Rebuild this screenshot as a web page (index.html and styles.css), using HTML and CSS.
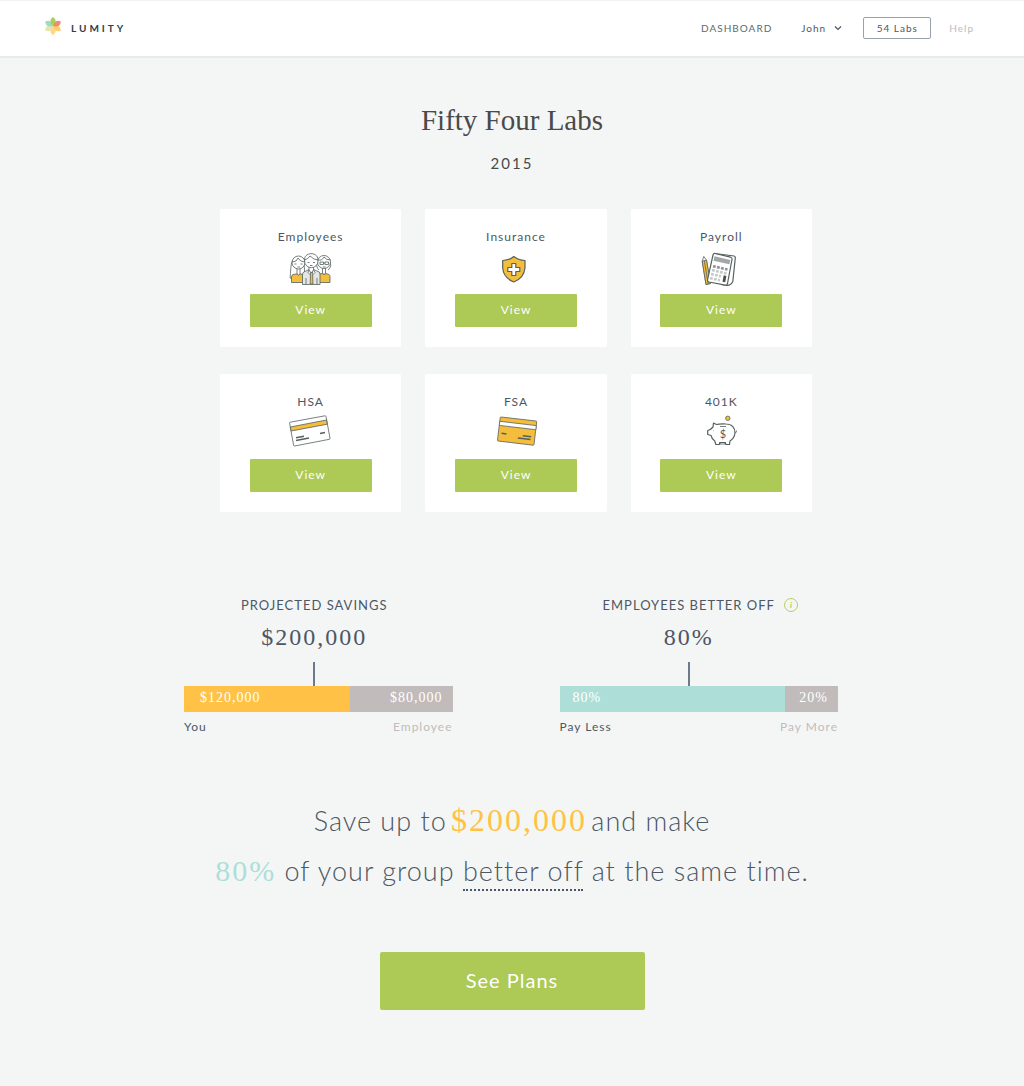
FILE: index.html
```
<!DOCTYPE html>
<html lang="en">
<head>
    <meta charset="UTF-8">
    <meta name="viewport" content="width=device-width, initial-scale=1.0">
    <title>Lumity - Fifty Four Labs</title>
    <link rel="stylesheet" href="styles.css">
</head>
<body>
    <header class="header">
        <a class="logo" href="#">
            <svg class="logo-mark" viewBox="0 0 18 20" aria-hidden="true">
                <g transform="translate(9 10)" fill-opacity="0.85">
                    <path fill="#fdd272" d="M0 0C-4 4-3 7 0 9C3 7 4 4 0 0Z"/>
                    <path fill="#fdc55a" transform="rotate(-60)" d="M0 0C-4 4-3 7 0 9C3 7 4 4 0 0Z"/>
                    <path fill="#dfe2a0" transform="rotate(60)" d="M0 0C-4 4-3 7 0 9C3 7 4 4 0 0Z"/>
                    <path fill="#8ed6bd" transform="rotate(120)" d="M0 0C-4 4-3 7 0 9C3 7 4 4 0 0Z"/>
                    <path fill="#f5735c" transform="rotate(-120)" d="M0 0C-4 4-3 7 0 9C3 7 4 4 0 0Z"/>
                    <path fill="#9dc544" transform="rotate(180)" d="M0 0C-4 4-3 7 0 9C3 7 4 4 0 0Z"/>
                </g>
            </svg>
            <span>LUMITY</span>
        </a>
        <nav class="nav-menu">
            <a class="nav-link" href="#">DASHBOARD</a>
            <div class="user-menu">
                <select class="user-select" aria-label="Account">
                    <option>John</option>
                </select>
                <svg class="chevron" viewBox="0 0 8 6" aria-hidden="true"><path d="M1 1.5L4 4.5L7 1.5"/></svg>
            </div>
            <button class="company-btn" type="button">54 Labs</button>
            <a class="help-link" href="#">Help</a>
        </nav>
    </header>

    <main>
        <h1>Fifty Four Labs</h1>
        <p class="year">2015</p>

        <!-- Benefit cards -->
        <section class="cards">
            <div class="card">
                <h2>Employees</h2>
                <svg class="icon" viewBox="0 0 44 36" aria-hidden="true">
                    <path fill="#fff" d="M4 10C1 15 2 22 1 28L6 29M14 10C16 14 15 22 16 25"/>
                    <path class="gold" d="M2.5 32.5V27Q2.5 24.5 5 24.3L8 24Q9.500 26 11 24L15 24.500V32.500Z"/>
                    <path fill="#fff" d="M8 18V24Q9.500 26 11 24V18"/>
                    <circle fill="#fff" cx="9.500" cy="12.500" r="6.500"/>
                    <path d="M3 12Q8 12 9 8Q11 12 16 12M5.500 14H7.500M11.500 14H13.500M8.500 17H11"/>
                    <path fill="#fff" d="M29 10Q26 17 30 20M40 10Q44 16 39 20"/>
                    <path class="gold" d="M28 32.500V24.500L33 23.500Q35 25.500 37 23.500L40 24.500Q41 25 41 27V32.500Z"/>
                    <path fill="#fff" d="M33.500 18V23.500Q35 25 36.500 23.500V18"/>
                    <circle fill="#fff" cx="35" cy="12" r="6.500"/>
                    <path d="M28.500 10Q33 11 35 7Q37 10 41.500 10M31 12H34.500V14.500H31ZM36 12H39.500V14.500H36ZM34.500 13H36M34 17H36.500"/>
                    <path class="grey" d="M13.500 34.500V24Q14 21.500 17 21L20 19.500H24.500L28 21Q31 21.500 31 24V34.500Z"/>
                    <path class="gold" d="M21.500 22H23.500L24 34H21.200Z"/>
                    <path fill="#fff" d="M20 16V20L22.300 23L24.500 20V16M20 20L19 22.500L21.500 25M24.500 20L26 22.500L23.500 25M17 28V34.500M28 28V34.500"/>
                    <circle fill="#fff" cx="22.300" cy="11" r="6.700"/>
                    <path fill="#fff" d="M15.500 10C15 2 29 1 29 10Q25 10 21 6Q19 9 15.500 10Z"/>
                    <path d="M18.500 12.500H20.500M24 12.500H26M21 15.500H23.500"/>
                </svg>
                <button class="btn" type="button">View</button>
            </div>
            <div class="card">
                <h2>Insurance</h2>
                <svg class="icon" viewBox="0 0 44 36" aria-hidden="true">
                    <path class="gold strong" d="M19.800 6.500Q24 10 31 10.500V18Q30 28 19.800 32Q9.600 28 8.700 18V10.500Q16 10 19.800 6.500Z"/>
                    <path class="strong" fill="#fff" d="M17.800 13.500H21.800V17.500H25.800V21.500H21.800V25.500H17.800V21.500H13.800V17.500H17.800Z"/>
                </svg>
                <button class="btn" type="button">View</button>
            </div>
            <div class="card">
                <h2>Payroll</h2>
                <svg class="icon" viewBox="0 0 44 36" aria-hidden="true">
                    <path fill="#fff" d="M3.200 11L4.800 6.500L7.500 10.200L11.500 33.500L7 34.500Z"/>
                    <path class="gold" d="M3.200 11L7.500 10.200L11.500 33.500L7 34.500Z"/>
                    <path d="M5.400 11L9.200 34"/>
                    <path class="strong" fill="#fff" d="M16 3.500L35 6Q36.500 6.300 36.300 8L33.800 31.500Q32 35.500 28 35.300L22 34.500"/>
                    <path class="strong" fill="#fff" d="M16 3.500L31.500 7.200Q33.400 7.800 33 9.500L28.500 33.500Q28 35.500 26.500 35.200L10 32Q8.200 31.500 8.500 30L14 5Q14.500 3.200 16 3.500Z"/>
                    <path class="dark-fill" fill-opacity=".5" stroke="none" d="M15.500 6.300L31.300 10L30.400 14.300L14.500 10.700Z"/>
                    <g class="keys">
                        <path class="key-top" d="M14 16.200L28.500 19.600"/>
                        <path d="M13 20.100L27.500 23.500M12 24.100L22 26.300M11 28.100L21 30.300"/>
                    </g>
                    <path class="dark-fill" stroke="none" d="M24.700 25.300L27.400 25.900L26.200 32.300L23.500 31.700Z"/>
                </svg>
                <button class="btn" type="button">View</button>
            </div>
            <div class="card">
                <h2>HSA</h2>
                <svg class="icon" viewBox="0 0 44 36" aria-hidden="true">
                    <path fill="#fff" d="M1.200 7.200L36 .8Q36.800 .7 37 1.500L41 23.300Q41.200 24.100 40.400 24.300L5.600 31Q4.800 31.100 4.600 30.300L.6 8.200Q.4 7.400 1.200 7.200Z"/>
                    <path class="gold" d="M1.300 12L37.500 5L38.300 9.200L2.100 16Z"/>
                    <path class="line" d="M7 22.700L15 21.300M7 25.500L20 23M31 18.500L36 17.500"/>
                </svg>
                <button class="btn" type="button">View</button>
            </div>
            <div class="card">
                <h2>FSA</h2>
                <svg class="icon" viewBox="0 0 44 36" aria-hidden="true">
                    <path class="gold" d="M7 2L42 6Q42.800 6.100 42.700 7L40 29.500Q39.900 30.300 39 30.200L4.200 26Q3.400 25.900 3.500 25L6.200 2.800Q6.300 1.900 7 2Z"/>
                    <path fill="#fff" d="M5.800 6.300L42.300 10.600L41.800 14.700L5.300 10.400Z"/>
                    <path class="line" d="M7.500 18.300L12.500 19M28.800 20.800L37.200 21.800M23.800 23L36.500 24.500"/>
                </svg>
                <button class="btn" type="button">View</button>
            </div>
            <div class="card">
                <h2>401K</h2>
                <svg class="icon" viewBox="0 0 44 36" aria-hidden="true">
                    <circle class="gold" cx="28.800" cy="3.300" r="2.200"/>
                    <path class="strong" fill="#fff" d="M14.500 8L17.500 9.500Q20 8.800 27 9C33 9 36.200 13 36 18Q35.500 23 31 26L30.500 29.500H26.800L26.300 27.500H20.800L20.300 29.500H16.800L15.800 26Q13 24.500 12 20.500L8.700 19.500V15.500Q11.500 15 14 12Z"/>
                    <path d="M36 17.500Q37.800 18 37.500 15.500M21 11.500H27M14.500 15.500H15M21 27.500V29H26V27.500"/>
                    <text x="24" y="22.500">$</text>
                </svg>
                <button class="btn" type="button">View</button>
            </div>
        </section>

        <!-- Savings summary -->
        <section class="stats">
            <div class="stat">
                <div class="figure figure-savings">
                    <div class="stat-title">
                        <h3>PROJECTED SAVINGS</h3>
                    </div>
                    <p class="amount">$200,000</p>
                    <div class="tick"></div>
                </div>
                <div class="bar">
                    <div class="share you">$120,000</div>
                    <div class="share rest">$80,000</div>
                </div>
                <div class="legend">
                    <span>You</span>
                    <span class="muted">Employee</span>
                </div>
            </div>
            <div class="stat">
                <div class="figure figure-better">
                    <div class="stat-title">
                        <h3>EMPLOYEES BETTER OFF</h3>
                        <button class="info" type="button" aria-label="More information">i</button>
                    </div>
                    <p class="amount">80%</p>
                    <div class="tick"></div>
                </div>
                <div class="bar">
                    <div class="share less">80%</div>
                    <div class="share rest">20%</div>
                </div>
                <div class="legend">
                    <span>Pay Less</span>
                    <span class="muted">Pay More</span>
                </div>
            </div>
        </section>

        <p class="pitch">
            Save up to <span class="money">$200,000</span> and make<br>
            <span class="percent">80%</span> of your group <span class="term">better off</span> at the same time.
        </p>

        <button class="plans-btn" type="button">See Plans</button>
    </main>
</body>
</html>
```
FILE: styles.css
```
* {
    margin: 0;
    padding: 0;
    box-sizing: border-box;
}

body {
    background-color: #f4f6f6;
    color: #4d5664;
    font-family: 'Lato', sans-serif;
}

button,
select {
    font-family: inherit;
    cursor: pointer;
}

a {
    color: inherit;
    text-decoration: none;
}

/* Header */
.header {
    display: flex;
    justify-content: space-between;
    align-items: center;
    height: 58px;
    padding: 0 50px 2px 44px;
    background-color: white;
    border-top: 1px solid #f1f3f3;
    border-bottom: 2px solid #e9eaea;
}

.logo {
    display: flex;
    align-items: center;
    gap: 9px;
    color: #2e3d48;
    font-size: 10px;
    font-weight: bold;
    letter-spacing: 3px;
}

.logo-mark {
    width: 18px;
    height: 20px;
    margin-bottom: 4px;
}

.nav-menu {
    display: flex;
    align-items: center;
    font-size: 10px;
    letter-spacing: 1px;
}

.nav-link {
    margin-right: 29px;
    color: #5b6b6b;
}

.user-menu {
    display: flex;
    align-items: center;
    gap: 8px;
    margin-right: 21px;
}

.user-select {
    appearance: none;
    border: none;
    background: none;
    color: #4d5664;
    font-size: 10px;
    letter-spacing: 1px;
}

.chevron {
    width: 8px;
    height: 6px;
    fill: none;
    stroke: #4d5664;
    stroke-width: 1.2;
}

.company-btn {
    width: 68px;
    height: 22px;
    margin-right: 18px;
    border: 1px solid #99a1ae;
    border-radius: 2px;
    background-color: white;
    color: #4d5664;
    font-size: 10px;
    letter-spacing: 1px;
}

.help-link {
    color: #b9bcc0;
}

/* Page */
main {
    padding: 42px 20px 76px;
    text-align: center;
}

h1 {
    color: #4a4a4a;
    font-family: 'Liberation Serif', serif;
    font-size: 29px;
    font-weight: normal;
    line-height: 40px;
}

.year {
    margin-top: 12px;
    color: #4a4a4a;
    font-size: 15px;
    line-height: 22px;
    letter-spacing: 2px;
}

/* Cards */
.cards {
    display: grid;
    grid-template-columns: repeat(3, 1fr);
    gap: 27px 24px;
    max-width: 600px;
    margin: 35px auto 0;
    padding-left: 8px;
}

.card {
    display: flex;
    flex-direction: column;
    align-items: center;
    padding: 19px 20px 20px;
    background-color: white;
    border-radius: 2px;
}

.card h2 {
    font-size: 12px;
    font-weight: normal;
    line-height: 18px;
    letter-spacing: 1px;
}

.icon {
    width: 44px;
    height: 36px;
    margin: 4px 0 8px;
    fill: none;
    stroke: #56615f;
    stroke-width: 0.8;
    stroke-linejoin: round;
}

.icon .gold {
    fill: #f4bd3b;
}

.icon .grey {
    fill: #e3e8e6;
}

.icon .strong {
    stroke-width: 1.2;
}

.icon .line {
    stroke-width: 1.6;
}

.icon .dark-fill {
    fill: #46504f;
}

.icon .keys {
    stroke: #c6c9c9;
    stroke-width: 2.6;
    stroke-dasharray: 2.8 1.3;
}

.icon .key-top {
    stroke: #8d9393;
}

.icon text {
    fill: #56615f;
    stroke: none;
    font-size: 11px;
    text-anchor: middle;
}

.btn {
    width: 122px;
    height: 33px;
    padding-bottom: 2px;
    border: none;
    border-radius: 1px;
    background-color: #adc956;
    color: white;
    font-size: 12px;
    letter-spacing: 1px;
}

/* Savings summary */
.stats {
    display: grid;
    grid-template-columns: 27fr 28fr;
    gap: 107px;
    max-width: 656px;
    margin: 83px auto 0;
    padding-right: 2px;
}

.figure-savings {
    padding-right: 8px;
}

.figure-better {
    padding-right: 20px;
}

.stat-title {
    display: grid;
    grid-template-columns: 1fr auto 1fr;
    align-items: center;
    gap: 9px;
}

.stat-title h3 {
    grid-column: 2;
    font-size: 13px;
    font-weight: normal;
    line-height: 20px;
    letter-spacing: 1px;
    white-space: nowrap;
}

.info {
    width: 14px;
    height: 14px;
    border: 1px solid #b4cf63;
    border-radius: 50%;
    background: none;
    color: #adc956;
    font-size: 8px;
    font-style: italic;
    font-weight: bold;
    line-height: 12px;
}

.amount {
    margin-top: 6px;
    font-family: 'Liberation Serif', serif;
    font-size: 24px;
    line-height: 32px;
    letter-spacing: 2px;
}

.tick {
    width: 2px;
    height: 24px;
    margin: 9px auto 0;
    background-color: #6d7a8c;
}

.bar {
    display: flex;
    height: 26px;
    color: white;
    font-family: 'Liberation Serif', serif;
    font-size: 14px;
    line-height: 24px;
    letter-spacing: 1px;
}

.share {
    padding: 0 13px;
    text-align: left;
}

.you {
    width: 62%;
    padding-left: 16px;
    background-color: #ffc247;
}

.less {
    width: 81%;
    background-color: #addfd8;
}

.rest {
    flex: 1;
    padding: 0 10px;
    background-color: #c2bbbb;
    text-align: right;
}

.legend {
    display: flex;
    justify-content: space-between;
    margin-top: 6px;
    font-size: 12px;
    line-height: 18px;
    letter-spacing: 1px;
}

.muted {
    color: #c2bbbb;
}

/* Call to action */
.pitch {
    margin-top: 60px;
    font-size: 27px;
    font-weight: 300;
    line-height: 50px;
    letter-spacing: 1px;
}

.money,
.percent {
    font-family: 'Liberation Serif', serif;
    line-height: 1;
    letter-spacing: 2px;
}

.money {
    margin: 0 -4px;
    color: #ffc247;
    font-size: 32px;
}

.percent {
    color: #addfd8;
    font-size: 30px;
}

.term {
    padding-bottom: 2px;
    border-bottom: 2px dotted #4d5664;
}

.plans-btn {
    width: 265px;
    height: 58px;
    margin-top: 56px;
    padding-bottom: 2px;
    border: none;
    border-radius: 2px;
    background-color: #adc956;
    color: white;
    font-size: 20px;
    letter-spacing: 1px;
}
```
